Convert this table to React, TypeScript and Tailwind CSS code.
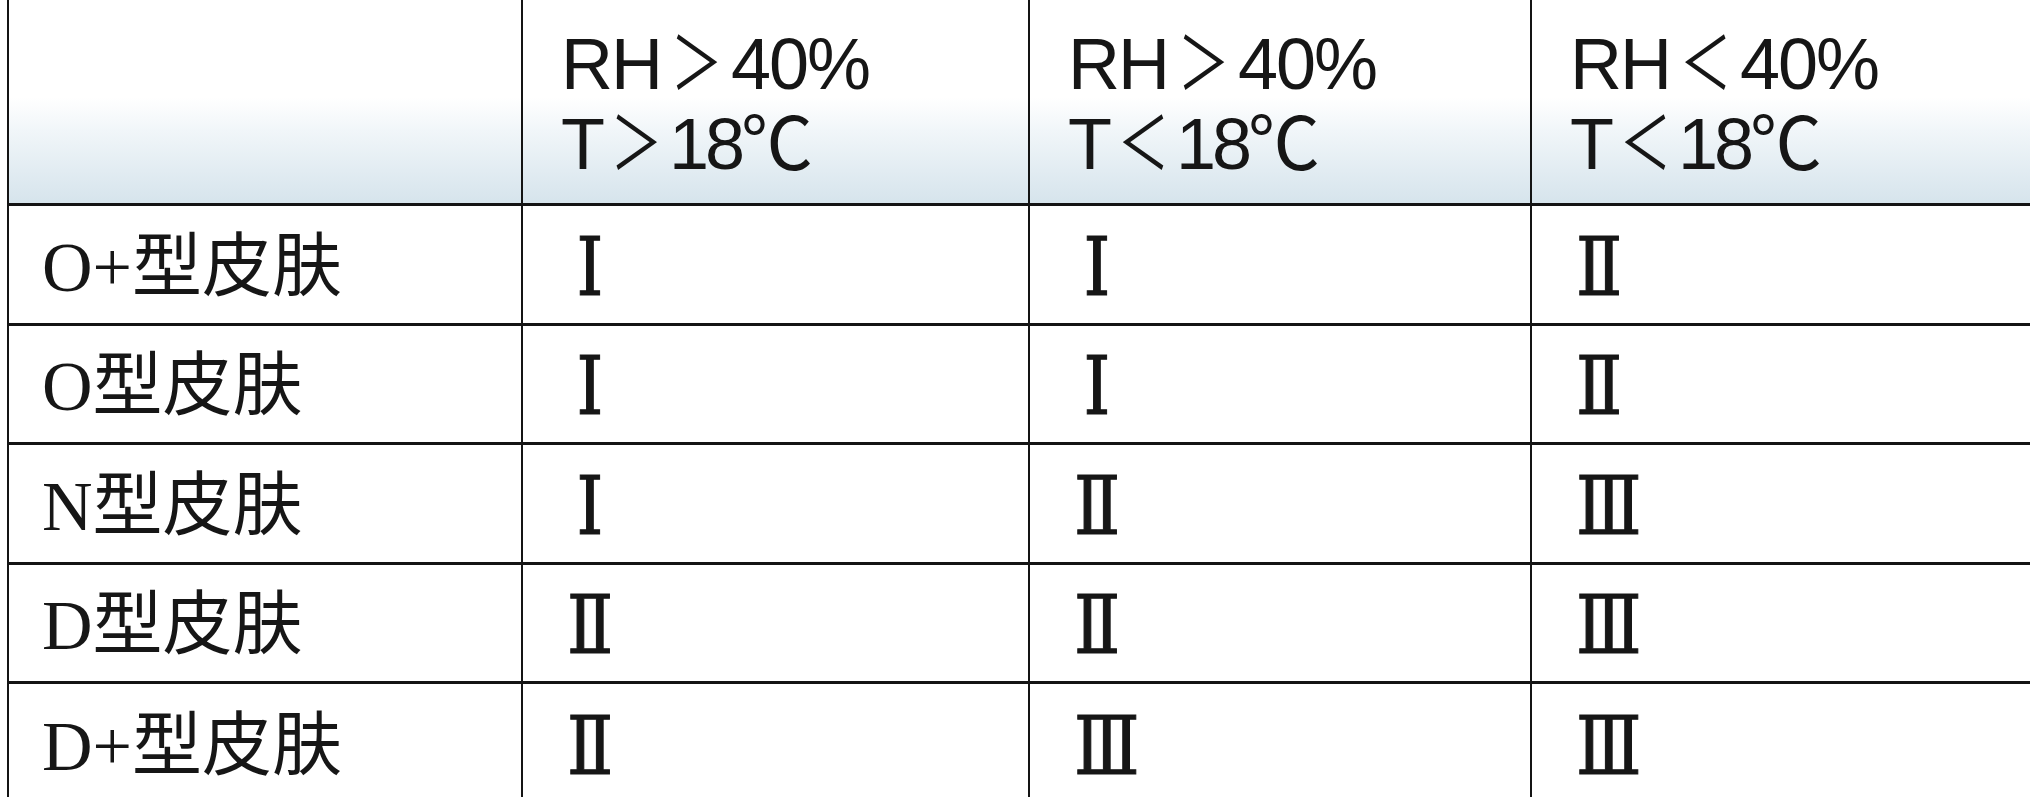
const headers: [string, string, string, string][] = [
  ["RH", "＞", "T", "＞"],
  ["RH", "＞", "T", "＜"],
  ["RH", "＜", "T", "＜"],
]

const rows: { label: string; grades: string[]; h: string }[] = [
  { label: "O+型皮肤", grades: ["Ⅰ", "Ⅰ", "Ⅱ"], h: "h-[120px]" },
  { label: "O型皮肤", grades: ["Ⅰ", "Ⅰ", "Ⅱ"], h: "h-[119px]" },
  { label: "N型皮肤", grades: ["Ⅰ", "Ⅱ", "Ⅲ"], h: "h-[120px]" },
  { label: "D型皮肤", grades: ["Ⅱ", "Ⅱ", "Ⅲ"], h: "h-[119px]" },
  { label: "D+型皮肤", grades: ["Ⅱ", "Ⅲ", "Ⅲ"], h: "h-[120px]" },
]

const cols = "grid grid-cols-[514px_507px_502px_1fr]"

function Sign({ c }: { c: string }) {
  return <span className="inline-block scale-x-[0.72]">{c}</span>
}

export default function App() {
  return (
    <div className="h-[797px] w-[2030px] overflow-hidden bg-white text-[#161616]">
      <div className="ml-[7px] border-l-2 border-[#141414]">
        {/* header */}
        <div
          className={`${cols} h-[206px] border-b-[3px] border-[#141414] bg-[linear-gradient(to_bottom,#ffffff_0%,#ffffff_48%,#f1f6f9_64%,#e2ecf2_84%,#d6e4ec_100%)]`}
        >
          <div className="border-r-2 border-[#141414]" />
          {headers.map(([a, s1, b, s2], i) => (
            <div
              key={i}
              className={`pl-[38px] pt-[24px] font-['Liberation_Sans','Noto_Sans_CJK_SC',sans-serif] text-[72px] leading-[80px] ${
                i < 2 ? "border-r-2 border-[#141414]" : ""
              }`}
            >
              <div className="tracking-[-2px]">
                {a}
                <Sign c={s1} />
                40%
              </div>
              <div className="tracking-[-4px]">
                {b}
                <Sign c={s2} />
                18℃
              </div>
            </div>
          ))}
        </div>

        {rows.map((row, r) => (
          <div
            key={row.label}
            className={`${cols} ${row.h} ${
              r < rows.length - 1 ? "border-b-[3px] border-[#141414]" : ""
            }`}
          >
            <div className="flex items-center border-r-2 border-[#141414] pl-[33px] pt-[6px] font-['Liberation_Serif','Noto_Sans_CJK_SC',serif] text-[70px] leading-none">
              {row.label}
            </div>
            {row.grades.map((g, i) => (
              <div
                key={i}
                className={`flex items-center pl-[40px] pt-[6px] ${
                  i < 2 ? "border-r-2 border-[#141414]" : ""
                }`}
              >
                <span className="inline-block w-[54px] scale-x-[0.85] text-center font-['DejaVu_Serif','Liberation_Serif',serif] text-[80px] leading-none [-webkit-text-stroke:1.2px_#161616]">
                  {g}
                </span>
              </div>
            ))}
          </div>
        ))}
      </div>
    </div>
  )
}
